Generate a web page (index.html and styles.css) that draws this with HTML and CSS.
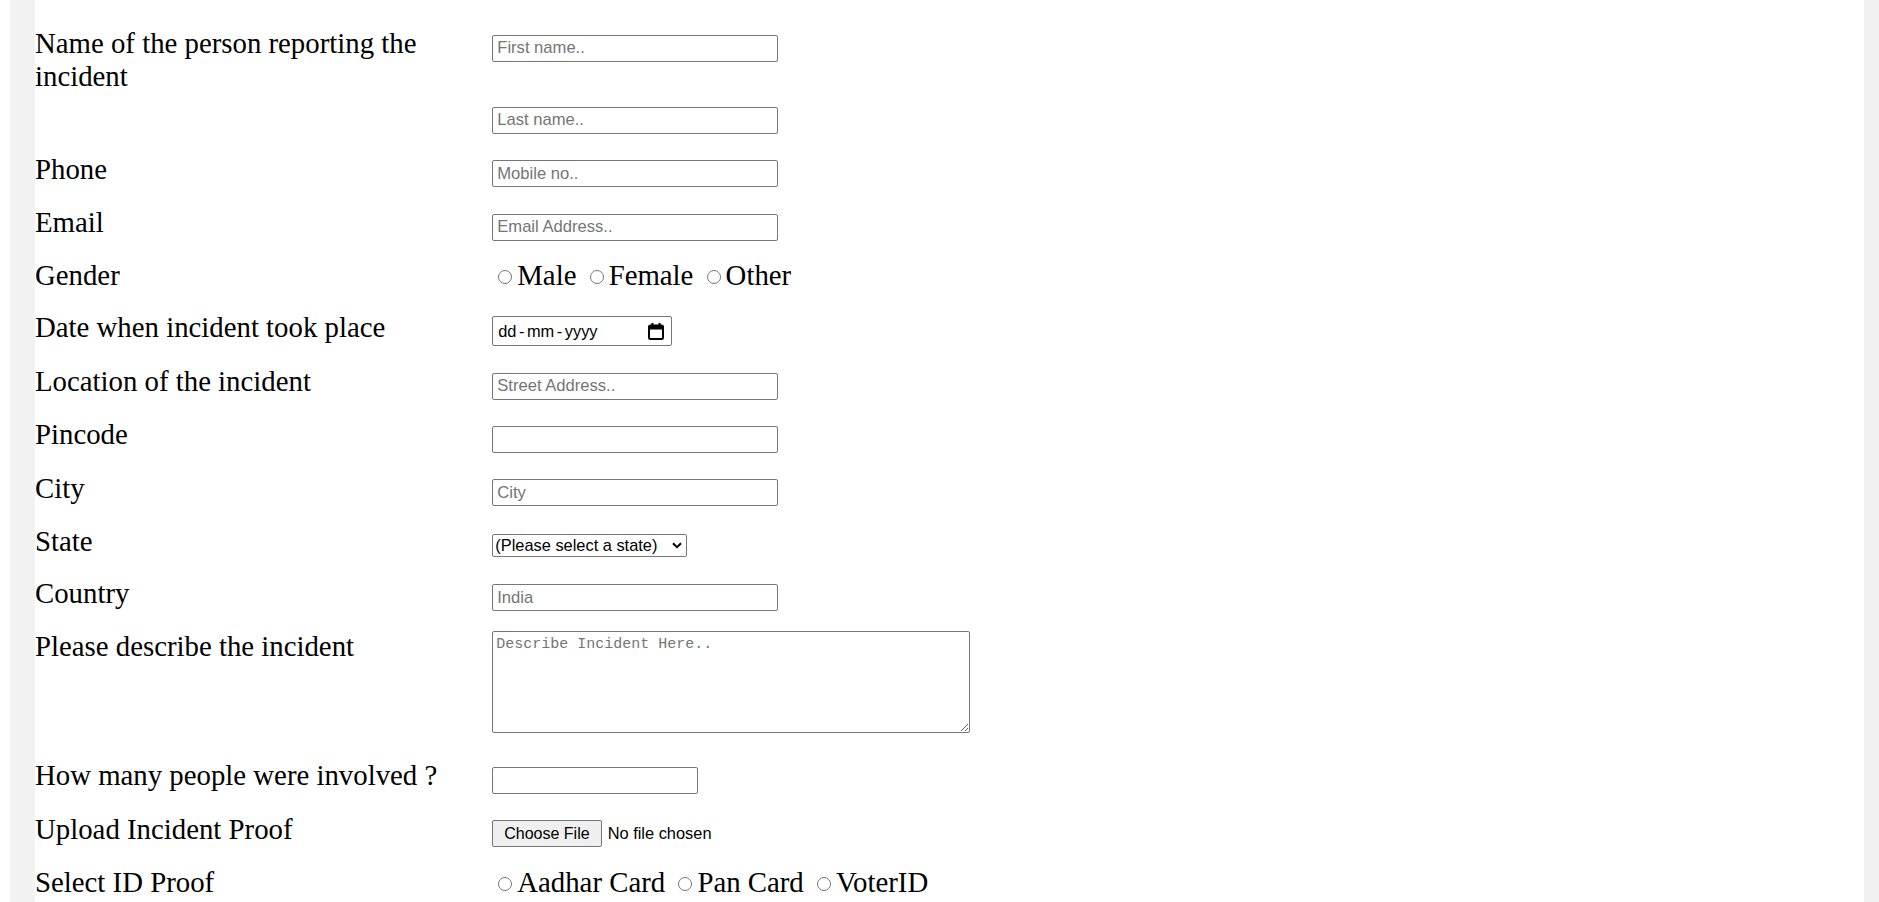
FILE: index.html
```html
<!DOCTYPE html>
<html lang="en">
<head>
<meta charset="utf-8">
<title>Incident Report</title>
<link rel="stylesheet" href="styles.css">
</head>
<body>
<div class="shell">
  <form class="form">
    <div class="row">
      <label class="label">Name of the person reporting the incident</label>
      <div class="field stack">
        <input class="input" type="text" placeholder="First name..">
        <input class="input" type="text" placeholder="Last name..">
      </div>
    </div>
    <div class="row">
      <label class="label">Phone</label>
      <div class="field"><input class="input" type="text" placeholder="Mobile no.."></div>
    </div>
    <div class="row">
      <label class="label">Email</label>
      <div class="field"><input class="input" type="text" placeholder="Email Address.."></div>
    </div>
    <div class="row">
      <label class="label">Gender</label>
      <div class="field"><label class="opt"><input class="radio" type="radio" name="gender">Male</label> <label class="opt"><input class="radio" type="radio" name="gender">Female</label> <label class="opt"><input class="radio" type="radio" name="gender">Other</label></div>
    </div>
    <div class="row">
      <label class="label">Date when incident took place</label>
      <div class="field">
        <span class="datebox" role="textbox" aria-label="Date when incident took place">
          <span class="date-text">dd<span class="sep">-</span>mm<span class="sep">-</span>yyyy</span>
          <svg class="cal" width="16" height="18" viewBox="0 0 16 18" aria-hidden="true">
            <rect x="1" y="3.5" width="14" height="13.5" rx="1.5" fill="none" stroke="#000" stroke-width="2"/>
            <rect x="1" y="3.5" width="14" height="4" fill="#000"/>
            <rect x="3.5" y="1" width="2" height="3" fill="#000"/>
            <rect x="10.5" y="1" width="2" height="3" fill="#000"/>
          </svg>
        </span>
      </div>
    </div>
    <div class="row">
      <label class="label">Location of the incident</label>
      <div class="field"><input class="input" type="text" placeholder="Street Address.."></div>
    </div>
    <div class="row">
      <label class="label">Pincode</label>
      <div class="field"><input class="input" type="text"></div>
    </div>
    <div class="row">
      <label class="label">City</label>
      <div class="field"><input class="input" type="text" placeholder="City"></div>
    </div>
    <div class="row">
      <label class="label">State</label>
      <div class="field">
        <span class="select-wrap">
          <select class="select">
            <option>(Please select a state)</option>
            <option>Andhra Pradesh</option>
            <option>Maharashtra</option>
          </select>
          <svg class="chevron" width="10" height="7" viewBox="0 0 10 7" aria-hidden="true"><path d="M1 1.2 L5 5.2 L9 1.2" fill="none" stroke="#000" stroke-width="2"/></svg>
        </span>
      </div>
    </div>
    <div class="row">
      <label class="label">Country</label>
      <div class="field"><input class="input" type="text" placeholder="India"></div>
    </div>
    <div class="row row-top">
      <label class="label">Please describe the incident</label>
      <div class="field"><textarea class="textarea" placeholder="Describe Incident Here.."></textarea></div>
    </div>
    <div class="row">
      <label class="label">How many people were involved ?</label>
      <div class="field"><input class="input number" type="number"></div>
    </div>
    <div class="row">
      <label class="label">Upload Incident Proof</label>
      <div class="field"><input class="file" type="file"></div>
    </div>
    <div class="row">
      <label class="label">Select ID Proof</label>
      <div class="field"><label class="opt"><input class="radio" type="radio" name="idproof">Aadhar Card</label> <label class="opt"><input class="radio" type="radio" name="idproof">Pan Card</label> <label class="opt"><input class="radio" type="radio" name="idproof">VoterID</label></div>
    </div>
  </form>
</div>
</body>
</html>
```
FILE: styles.css
```css
html, body {
  margin: 0;
  height: 100%;
  overflow: hidden;
}

body {
  background: #ffffff;
  padding-left: 10px;
  box-sizing: border-box;
}

.shell {
  height: 100%;
  box-sizing: border-box;
  background: #f2f2f2;
  padding-left: 25px;
  border-right: 15px solid #f1f1f1;
}

.form {
  height: 100%;
  box-sizing: border-box;
  background: #ffffff;
  padding-top: 27px;
  font-family: "Liberation Serif", "Times New Roman", serif;
  color: #000;
}

.row {
  display: flex;
  align-items: baseline;
  margin-bottom: 18.85px;
}

.row-top {
  align-items: flex-start;
  margin-bottom: 26px;
}

.label {
  flex: none;
  width: 25%;
  font-size: 28.8px;
  line-height: 33px;
}

.field {
  flex: 1;
  font-size: 28.8px;
  line-height: 33px;
}

.stack {
  display: flex;
  flex-direction: column;
  align-items: flex-start;
  gap: 45.4px;
}

.input {
  box-sizing: border-box;
  width: 286px;
  height: 27px;
  margin: 0;
  padding: 0 4px;
  font: 16.6px "Liberation Sans", Arial, sans-serif;
  color: #000;
  border: 1px solid #767676;
  border-radius: 2px;
  background: #fff;
  vertical-align: baseline;
}

.input::placeholder,
.textarea::placeholder {
  color: #757575;
}

.number {
  width: 206px;
}

.datebox {
  box-sizing: border-box;
  display: inline-flex;
  align-items: center;
  justify-content: space-between;
  width: 180px;
  height: 30px;
  padding: 0 7px 0 5px;
  font: 16.4px "Liberation Sans", Arial, sans-serif;
  line-height: 18px;
  color: #000;
  border: 1px solid #767676;
  border-radius: 2px;
  background: #fff;
}

.date-text {
  white-space: nowrap;
}

.sep {
  margin: 0 2.5px;
}

.cal {
  flex: none;
  display: block;
}

.select-wrap {
  position: relative;
  display: inline-flex;
}

.select {
  box-sizing: border-box;
  width: 195px;
  height: 23px;
  margin: 0;
  padding: 0 20px 0 2px;
  font: 16.4px "Liberation Sans", Arial, sans-serif;
  color: #000;
  border: 1px solid #767676;
  border-radius: 2px;
  background: #fff;
  appearance: none;
  -webkit-appearance: none;
}

.chevron {
  position: absolute;
  right: 5px;
  top: 8px;
  pointer-events: none;
}

.textarea {
  box-sizing: border-box;
  display: block;
  width: 478px;
  height: 102px;
  margin: 1px 0 0;
  padding: 4px 3px;
  font: 15px "Liberation Mono", "DejaVu Sans Mono", monospace;
  border: 1px solid #767676;
  border-radius: 2px;
}

.file {
  margin: 0;
  font: 16.4px "Liberation Sans", Arial, sans-serif;
  color: #000;
}

.file::file-selector-button {
  box-sizing: border-box;
  height: 27px;
  margin: 0 6px 0 0;
  padding: 0 11px;
  font: 16px "Liberation Sans", Arial, sans-serif;
  color: #000;
  background: #efefef;
  border: 1px solid #767676;
  border-radius: 2px;
}

.radio {
  width: 14px;
  height: 14px;
  margin: 3px 5px 0 6px;
  vertical-align: 1.5px;
}
```
